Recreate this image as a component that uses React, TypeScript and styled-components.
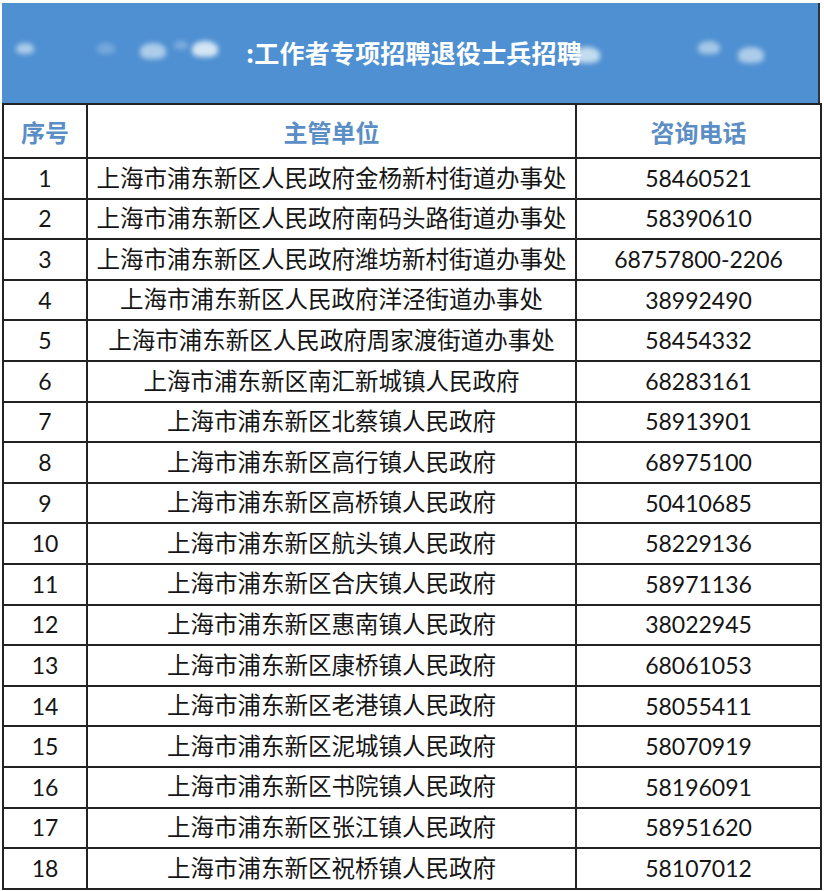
import styled, { createGlobalStyle } from "styled-components";

const GlobalStyle = createGlobalStyle`
  html, body {
    margin: 0;
    padding: 0;
    background: #ffffff;
  }
  body {
    font-family: Lato, "Noto Sans CJK SC", sans-serif;
    color: #151515;
  }
`;

const Page = styled.div`
  width: 824px;
  height: 891px;
  padding: 3px 4px 0 2px;
  box-sizing: border-box;
  background: #fff;
`;

const Banner = styled.div`
  position: relative;
  height: 100px;
  background: #4f90d2;
  border-right: 2px solid #2a3540;
  display: flex;
  align-items: center;
  justify-content: center;
  overflow: hidden;
`;

const Title = styled.div`
  font-family: "Noto Sans CJK SC", sans-serif;
  font-weight: 700;
  font-size: 25px;
  letter-spacing: 0.2px;
  color: #ffffff;
  margin-left: 8px;
  margin-top: -2px;
`;

const Blob = styled.span<{ $x: number; $y: number; $w: number; $o: number }>`
  position: absolute;
  left: ${(p) => p.$x}px;
  top: ${(p) => p.$y}px;
  width: ${(p) => p.$w}px;
  height: ${(p) => Math.round(p.$w * 0.6)}px;
  border-radius: 50% 50% 35% 35%;
  background: rgba(235, 245, 250, ${(p) => p.$o});
  filter: blur(2.5px);
`;

const Table = styled.table`
  width: 818px;
  border-collapse: collapse;
  table-layout: fixed;
`;

const Th = styled.th`
  height: 52px;
  border: 2px solid #222;
  font-family: "Noto Sans CJK SC", sans-serif;
  font-weight: 700;
  font-size: 24px;
  color: #5a8ec4;
  text-align: center;
  padding: 0;
`;

const Td = styled.td<{ $wide?: boolean }>`
  height: 38.6px;
  border: 2px solid #222;
  font-size: ${(p) => (p.$wide ? "23.5px" : "23px")};
  font-weight: 400;
  text-align: center;
  padding: 0;
  white-space: nowrap;
  line-height: 1;
`;

const rows: [string, string][] = [
  ["上海市浦东新区人民政府金杨新村街道办事处", "58460521"],
  ["上海市浦东新区人民政府南码头路街道办事处", "58390610"],
  ["上海市浦东新区人民政府潍坊新村街道办事处", "68757800-2206"],
  ["上海市浦东新区人民政府洋泾街道办事处", "38992490"],
  ["上海市浦东新区人民政府周家渡街道办事处", "58454332"],
  ["上海市浦东新区南汇新城镇人民政府", "68283161"],
  ["上海市浦东新区北蔡镇人民政府", "58913901"],
  ["上海市浦东新区高行镇人民政府", "68975100"],
  ["上海市浦东新区高桥镇人民政府", "50410685"],
  ["上海市浦东新区航头镇人民政府", "58229136"],
  ["上海市浦东新区合庆镇人民政府", "58971136"],
  ["上海市浦东新区惠南镇人民政府", "38022945"],
  ["上海市浦东新区康桥镇人民政府", "68061053"],
  ["上海市浦东新区老港镇人民政府", "58055411"],
  ["上海市浦东新区泥城镇人民政府", "58070919"],
  ["上海市浦东新区书院镇人民政府", "58196091"],
  ["上海市浦东新区张江镇人民政府", "58951620"],
  ["上海市浦东新区祝桥镇人民政府", "58107012"],
];

// blurred leftovers of the cut-out title
const blobs = [
  { x: 14, y: 40, w: 18, o: 0.6 },
  { x: 95, y: 40, w: 18, o: 0.25 },
  { x: 138, y: 40, w: 26, o: 0.6 },
  { x: 172, y: 38, w: 14, o: 0.3 },
  { x: 190, y: 38, w: 26, o: 0.85 },
  { x: 572, y: 44, w: 26, o: 0.75 },
  { x: 696, y: 38, w: 22, o: 0.55 },
  { x: 736, y: 44, w: 26, o: 0.6 },
];

export default function App() {
  return (
    <>
      <GlobalStyle />
      <Page>
        <Banner>
          {blobs.map((b, i) => (
            <Blob key={i} $x={b.x} $y={b.y} $w={b.w} $o={b.o} />
          ))}
          <Title>:工作者专项招聘退役士兵招聘</Title>
        </Banner>
        <Table>
          <colgroup>
            <col style={{ width: 84 }} />
            <col style={{ width: 489 }} />
            <col style={{ width: 245 }} />
          </colgroup>
          <thead>
            <tr>
              <Th>序号</Th>
              <Th>主管单位</Th>
              <Th>咨询电话</Th>
            </tr>
          </thead>
          <tbody>
            {rows.map(([unit, phone], i) => (
              <tr key={i}>
                <Td>{i + 1}</Td>
                <Td $wide>{unit}</Td>
                <Td>{phone}</Td>
              </tr>
            ))}
          </tbody>
        </Table>
      </Page>
    </>
  );
}
